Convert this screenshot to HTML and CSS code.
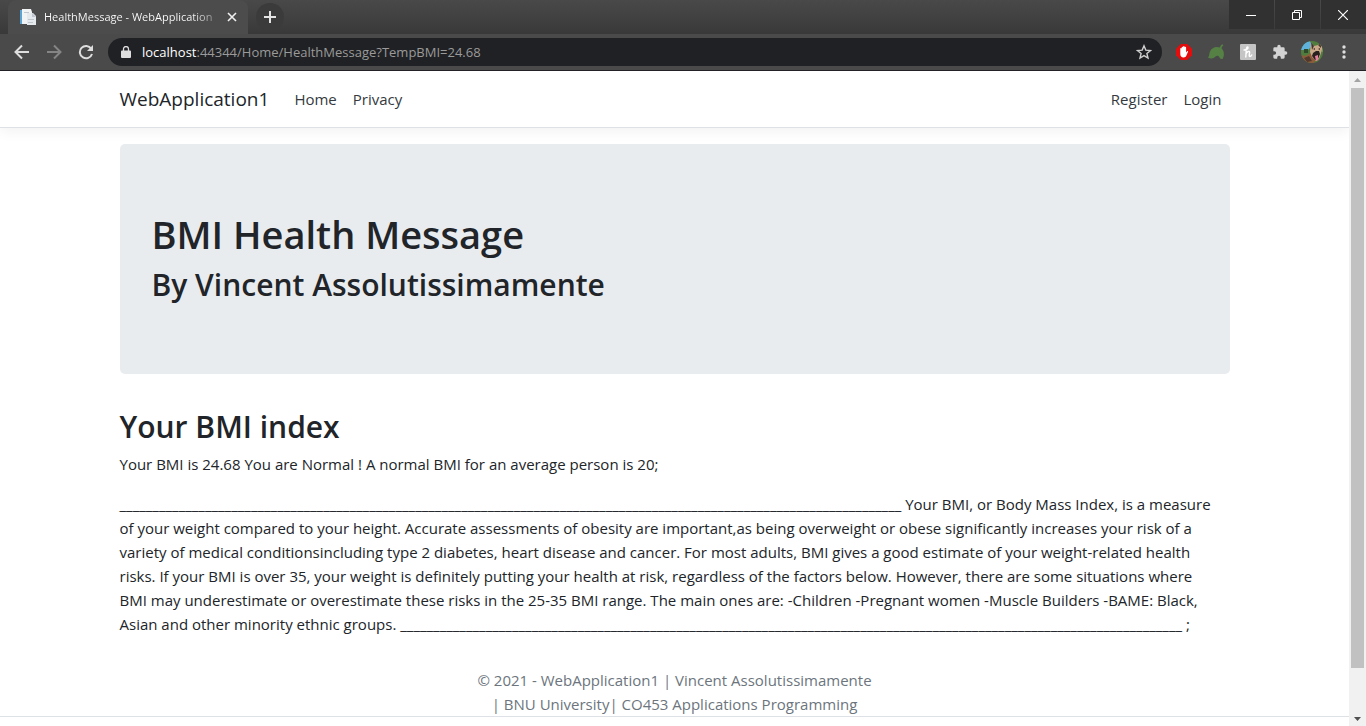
FILE: index.html
```html
<!DOCTYPE html>
<html lang="en">
<head>
<meta charset="utf-8">
<title>HealthMessage - WebApplication1</title>
<link rel="stylesheet" href="styles.css">
</head>
<body>
<div class="tabstrip">
  <div class="tab">
    <svg class="favicon" width="16" height="16" viewBox="0 0 16 16"><path d="M0 1h10v14H0z" fill="#cfd6dc"/><path d="M0 1h4v14H0z" fill="#5ba3d3"/><path d="M2 0h9l1 3v12H2z" fill="#f1f3f5"/><path d="M7 4h6l3 3v9H7z" fill="#e4e9ed"/><path d="M12 4v4h4zM8 10h6v1H8zM8 13h5v1H8zM4 3h5v1H4z" fill="#bfc6cd"/></svg>
    <span class="tab-title">HealthMessage - WebApplication</span>
    <button class="tab-close" aria-label="Close tab"><svg width="10" height="10" viewBox="0 0 10 10" stroke="#f1f1f1" stroke-width="1.6"><path d="M1 1l8 8M9 1L1 9"/></svg></button>
  </div>
  <button class="new-tab" aria-label="New tab"><svg width="12" height="12" viewBox="0 0 12 12" stroke="#e4e4e4" stroke-width="2"><path d="M6 0v12M0 6h12"/></svg></button>
  <div class="window-controls">
    <button aria-label="Minimize"><svg width="10" height="10" viewBox="0 0 10 10" stroke="#fff"><path d="M0 5.500h10"/></svg></button>
    <button aria-label="Restore"><svg width="10" height="10" viewBox="0 0 10 10" stroke="#fff" fill="none"><path d="M.5 2.500h7v7h-7zM2.500 2.500v-2h7v7h-2"/></svg></button>
    <button aria-label="Close"><svg width="10" height="10" viewBox="0 0 10 10" stroke="#fff" stroke-width="1.200"><path d="M0 0l10 10M10 0L0 10"/></svg></button>
  </div>
</div>
<div class="toolbar">
  <button class="tool" aria-label="Back"><svg width="16" height="16" viewBox="0 0 16 16" fill="none" stroke="#dedede" stroke-width="2"><path d="M15 8H2M8 1.500L1.500 8 8 14.500"/></svg></button>
  <button class="tool" aria-label="Forward"><svg width="16" height="16" viewBox="0 0 16 16" fill="none" stroke="#858585" stroke-width="2"><path d="M1 8h13M8 1.500L14.500 8 8 14.500"/></svg></button>
  <button class="tool" aria-label="Reload"><svg width="16" height="16" viewBox="0 0 16 16"><path d="M13.200 4.600A6.200 6.200 0 1 0 14 10" fill="none" stroke="#dedede" stroke-width="2"/><path d="M15 1v6H9z" fill="#dedede"/></svg></button>
  <div class="address">
    <svg width="10" height="12" viewBox="0 0 10 12"><path d="M1 4.500h8a1 1 0 0 1 1 1V11a1 1 0 0 1-1 1H1a1 1 0 0 1-1-1V5.500a1 1 0 0 1 1-1z" fill="#dedede"/><path d="M2.500 5V3a2.500 2.500 0 0 1 5 0v2" fill="none" stroke="#dedede" stroke-width="1.300"/></svg>
    <div class="url"><span class="host">localhost</span>:44344/Home/HealthMessage?TempBMI=24.68</div>
    <button class="star" aria-label="Bookmark"><svg width="16" height="16" viewBox="0 0 16 16" fill="none" stroke="#cfcfcf" stroke-width="1.400"><path d="M8 1.800l1.800 4.300 4.700.4-3.600 3 1.100 4.600L8 11.600l-4 2.500 1.100-4.600-3.600-3 4.700-.4z"/></svg></button>
  </div>
  <div class="extensions">
    <button class="tool" aria-label="Ad blocker"><svg width="16" height="16" viewBox="0 0 16 16"><path d="M4.700 0h6.600L16 4.700v6.600L11.300 16H4.700L0 11.300V4.700z" fill="#e40d0d"/><path d="M4.300 8V4.800a.7.7 0 0 1 1.400 0V3.500a.7.7 0 0 1 1.400 0v-.8a.7.7 0 0 1 1.500 0v.8a.7.7 0 0 1 1.500 0v4.900l1-1.200c.5-.5 1.200-.1.900.5l-1.700 4c-.5 1.200-1.300 1.700-2.600 1.700-2.400 0-3.400-1.200-3.400-3.400z" fill="#fff"/></svg></button>
    <button class="tool" aria-label="Leaf extension"><svg width="16" height="16" viewBox="0 0 16 16"><path d="M0 13.500C1.500 12 1 10 2 7.500 3.200 4.500 6 3 9 3l3 .5C12.200 2 13 1 14.500.3l1 1.200C14.200 2.200 13.700 3.200 13.600 4.500 16.500 7 16.500 11.500 14.500 15c-1.300 0-2.500-.5-3-1.500C10.800 11.500 9 11 7.500 12.500 6 14.500 2.500 15.300 0 13.500z" fill="#558145"/></svg></button>
    <button class="tool" aria-label="Honey"><svg width="16" height="16" viewBox="0 0 16 16"><rect width="16" height="16" rx="1" fill="#c5c5c5"/><path d="M4 6C6.500 6 8.500 4.500 8 3.200 7.500 2.300 6.300 3.500 6.300 5.500L5.800 13M6 9.800C7 7.500 9.500 6.500 9.600 8.300c0 1.500-1 4.200.2 4.200.9 0 1.500-.7 1.900-1.500" fill="none" stroke="#fff" stroke-width="1.400" stroke-linecap="round"/></svg></button>
    <button class="tool" aria-label="Extensions"><svg width="16" height="16" viewBox="0 0 24 24"><path d="M20.500 11H19V7a2 2 0 0 0-2-2h-4V3.500a2.500 2.500 0 0 0-5 0V5H4a2 2 0 0 0-2 2v3.800h1.500a2.700 2.700 0 0 1 0 5.400H2V20a2 2 0 0 0 2 2h3.800v-1.500a2.700 2.700 0 0 1 5.400 0V22H17a2 2 0 0 0 2-2v-4h1.500a2.500 2.500 0 0 0 0-5z" fill="#d3d3d3"/></svg></button>
    <button class="tool" aria-label="Profile"><svg width="22" height="22" viewBox="0 0 22 22"><defs><clipPath id="av"><circle cx="11" cy="11" r="11"/></clipPath></defs><g clip-path="url(#av)"><path d="M0 0h22v22H0z" fill="#4f7d3d"/><path d="M0 3l9-3 2 5-4 4H0z" fill="#5fb2dc"/><path d="M17 3l5 2v6l-4-1z" fill="#6b9c4c"/><path d="M3 8h4v4H3z" fill="#2f4a2b"/><path d="M0 14l4 1 6-3 6 6-3 4H0z" fill="#8d5c3a"/><path d="M10 1l3 4 4-1 4-2 0 6-1 4-2 6-3 2-4-4-2-5z" fill="#caa98a"/><path d="M10 1l3 4-2 4zM20 2v5l-3-3zM12 8l2-1v2zM17 8l2-1v2z" fill="#46352c"/><path d="M12 12l3-2h3l1 3-2 5-3 1-3-4z" fill="#28211f"/><path d="M14 15l3-1v5l-2 1z" fill="#e87fa3"/><path d="M3 17l5-2 3 5-5 1z" fill="#51392e"/></g></svg></button>
    <button class="tool" aria-label="Menu"><svg width="4" height="16" viewBox="0 0 4 16" fill="#dedede"><circle cx="2" cy="3" r="1.700"/><circle cx="2" cy="8" r="1.700"/><circle cx="2" cy="13" r="1.700"/></svg></button>
  </div>
</div>
<div class="viewport">
  <div class="page">
    <header class="navbar">
      <nav class="container nav">
        <a class="brand" href="#">WebApplication1</a>
        <a href="#">Home</a>
        <a href="#">Privacy</a>
        <a class="register" href="#">Register</a>
        <a href="#">Login</a>
      </nav>
    </header>
    <main class="container">
      <section class="jumbotron">
        <h1>BMI Health Message</h1>
        <h2>By Vincent Assolutissimamente</h2>
      </section>
      <h2>Your BMI index</h2>
      <p>Your BMI is 24.68 You are Normal ! A normal BMI for an average person is 20;</p>
      <p class="report">_______________________________________________________________________________________________________________________ Your BMI, or Body Mass Index, is a measure<br>of your weight compared to your height. Accurate assessments of obesity are important,as being overweight or obese significantly increases your risk of a<br>variety of medical conditionsincluding type 2 diabetes, heart disease and cancer. For most adults, BMI gives a good estimate of your weight-related health<br>risks. If your BMI is over 35, your weight is definitely putting your health at risk, regardless of the factors below. However, there are some situations where<br>BMI may underestimate or overestimate these risks in the 25-35 BMI range. The main ones are: -Children -Pregnant women -Muscle Builders -BAME: Black,<br>Asian and other minority ethnic groups. _______________________________________________________________________________________________________________________ ;</p>
    </main>
    <footer class="footer">© 2021 - WebApplication1 | Vincent Assolutissimamente<br>| BNU University| CO453 Applications Programming</footer>
  </div>
  <div class="scrollbar">
    <svg width="17" height="17" viewBox="0 0 17 17"><path d="M5 11h7L8.500 7z" fill="#a3a3a3"/></svg>
    <div class="track"><div class="thumb"></div></div>
    <svg width="17" height="17" viewBox="0 0 17 17"><path d="M5 8h7l-3.500 4z" fill="#505050"/></svg>
  </div>
</div>
</body>
</html>
```
FILE: styles.css
```css
* { box-sizing: border-box; }
body { margin: 0; height: 100vh; display: flex; flex-direction: column; overflow: hidden; font: 15px/24px "Segoe UI", "Open Sans", "Noto Sans", sans-serif; color: #212529; background: #fff; }
button { border: 0; padding: 0; background: none; display: flex; align-items: center; justify-content: center; }
svg { display: block; flex: none; }
a { text-decoration: none; color: #343a40; }

.tabstrip { flex: none; height: 34px; display: flex; align-items: center; padding-left: 8px; background: linear-gradient(#494949, #393939); }
.tab { width: 240px; height: 34px; display: flex; align-items: center; gap: 8px; padding: 0 10px 0 12px; background: #4c4c4c; border-radius: 8px 8px 0 0; }
.tab-title { flex: 1; white-space: nowrap; font-size: 11px; line-height: 16px; color: transparent; background: linear-gradient(90deg, #fff 85%, #777); background-clip: text; }
.tab-close { width: 12px; height: 16px; }
.new-tab { width: 28px; height: 28px; margin-left: 8px; border-radius: 50%; background: #3b3b3b; }
.window-controls { margin-left: auto; align-self: flex-start; display: flex; gap: 1px; }
.window-controls button { width: 45px; height: 29px; padding-right: 2px; background: #313131; }

.toolbar { flex: none; height: 37px; display: flex; align-items: center; padding: 0 6px; background: #4a4a4a; border-bottom: 1px solid #242126; }
.tool { width: 32px; height: 28px; }
.address { flex: 1; height: 28px; margin: 0 6px; padding: 0 10px 0 13px; display: flex; align-items: center; gap: 11px; background: #202124; border-radius: 14px; }
.url { flex: 1; font-size: 13px; line-height: 20px; color: #9a9a9a; white-space: nowrap; }
.host { color: #fff; }
.star { width: 16px; height: 16px; }
.extensions { display: flex; }

.viewport { flex: 1; min-height: 0; display: flex; }
.page { flex: 1; min-width: 0; overflow: hidden; }
.container { width: 100%; max-width: 1140px; margin: 0 auto; padding: 0 15px; }
.navbar { height: 57px; border-bottom: 1px solid #dee2e6; box-shadow: 0 4px 12px rgba(0, 0, 0, .05); margin-bottom: 16px; }
.nav { display: flex; align-items: center; height: 56px; gap: 16px; }
.brand { font-size: 19px; color: #212529; margin-right: 9px; }
.register { margin-left: auto; }
.nav a:last-child { margin-right: 8px; }
.jumbotron { padding: 64px 32px; margin-bottom: 32px; border-radius: 5px; background: #e9ecef; }
h1, h2 { margin: 0 0 6px; padding-top: 2px; font-weight: 600; }
h1 { font-size: 38px; line-height: 48px; }
h2 { font-size: 30px; line-height: 38px; }
p { margin: 0 0 16px; }
.report { white-space: nowrap; }
.footer { margin-top: 32px; height: 49px; text-align: center; color: #6c757d; border-bottom: 1px solid #dee2e6; }
.scrollbar { flex: none; width: 17px; display: flex; flex-direction: column; background: #f1f1f1; }
.track { flex: 1; padding: 0 2px; }
.thumb { height: 93.4%; background: #c1c1c1; }
```
